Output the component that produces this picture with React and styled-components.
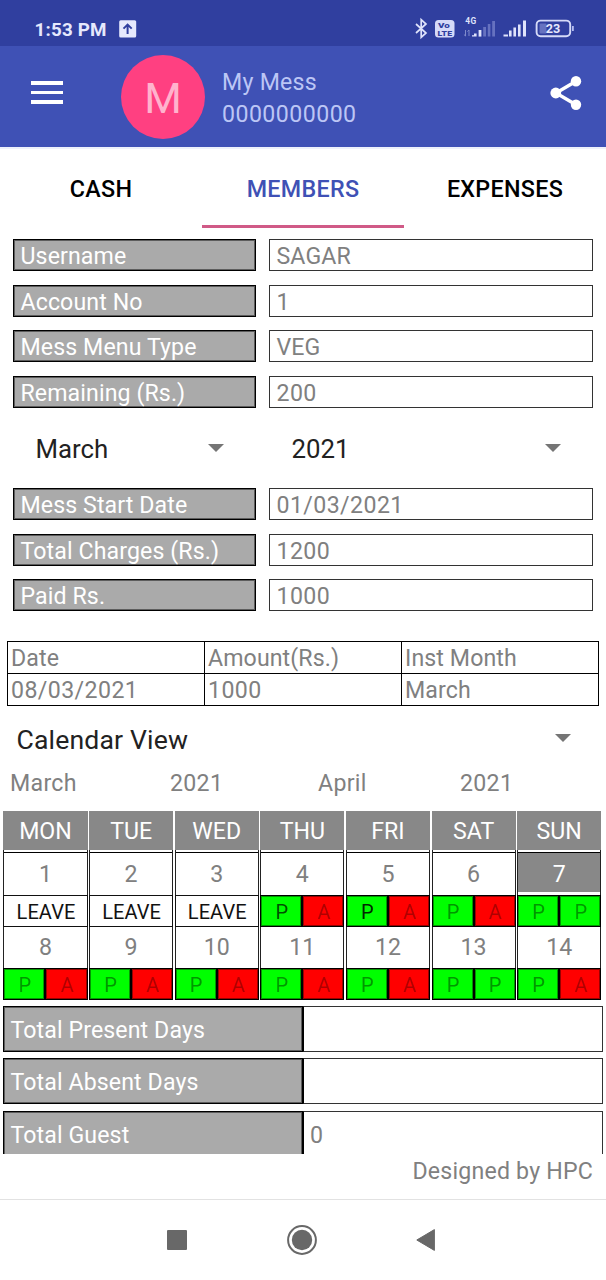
import React from 'react'
import styled, { createGlobalStyle } from 'styled-components'

const details = [
  ['Username', 'SAGAR'],
  ['Account No', '1'],
  ['Mess Menu Type', 'VEG'],
  ['Remaining (Rs.)', '200'],
]

const charges = [
  ['Mess Start Date', '01/03/2021'],
  ['Total Charges (Rs.)', '1200'],
  ['Paid Rs.', '1000'],
]

const payments = [
  ['Date', 'Amount(Rs.)', 'Inst Month'],
  ['08/03/2021', '1000', 'March'],
]

const weekDays = ['MON', 'TUE', 'WED', 'THU', 'FRI', 'SAT', 'SUN']

// L = leave, P = present, A = absent; dark sets how strong the first mark is
const days = [
  { day: 1, marks: 'L' },
  { day: 2, marks: 'L' },
  { day: 3, marks: 'L' },
  { day: 4, marks: 'PA', dark: 1 },
  { day: 5, marks: 'PA', dark: 2 },
  { day: 6, marks: 'PA' },
  { day: 7, marks: 'PP', today: true },
  { day: 8, marks: 'PA' },
  { day: 9, marks: 'PA' },
  { day: 10, marks: 'PA' },
  { day: 11, marks: 'PA' },
  { day: 12, marks: 'PA' },
  { day: 13, marks: 'PP' },
  { day: 14, marks: 'PA' },
]

const totals = [
  ['Total Present Days', ''],
  ['Total Absent Days', ''],
  ['Total Guest', '0'],
]

const isNumeric = (text) => /^[\d/]+$/.test(text)

function StatusIcons() {
  return (
    <svg width="170" height="24" viewBox="412 18 170 24">
      <path d="M416 25 L426 34 L421.2 38.4 V20.6 L426 25 L416 34" fill="none" stroke="#dfe3fb" strokeWidth="1.7" />
      <rect x="435" y="21" width="19.5" height="17.5" rx="3.5" fill="#d5daf8" />
      <g fill="#303f9f" fontFamily="Roboto, sans-serif" fontWeight="900">
        <text x="438" y="28.9" fontSize="8" textLength="12" lengthAdjust="spacingAndGlyphs">Vo</text>
        <text x="437.6" y="36.6" fontSize="8" textLength="14.5" lengthAdjust="spacingAndGlyphs">LTE</text>
      </g>
      <text x="465.2" y="25.4" fontSize="8.4" fontWeight="700" fill="#dfe3fb" fontFamily="Roboto, sans-serif" textLength="11">4G</text>
      <path d="M465.5 31V37M463.9 35.5L465.5 37M469 37V31M467.4 32.5L469 31" fill="none" stroke="#7f8acb" strokeWidth="1" />
      <path d="M472 36.2H476V37.6H472ZM474 34.5H476.6V37.6H474Z" fill="#dfe3fb" />
      <path d="M478.6 31H481.4V37.6H478.6Z" fill="#dfe3fb" />
      <path d="M483.2 28H486V37.6H483.2ZM487.8 25H490.4V37.6H487.8ZM492.2 22H495V37.6H492.2Z" fill="#6672c0" />
      <path d="M503.5 35.5H508V37.6H503.5ZM509 31.5H511.6V37.6H509ZM513.4 28.5H516V37.6H513.4ZM518 25.5H520.6V37.6H518ZM523 21.5H526V37.6H523Z" fill="#dfe3fb" />
      <rect x="536.6" y="21.6" width="33.6" height="15.6" rx="4" fill="none" stroke="#d5daf8" strokeWidth="1.9" />
      <rect x="539.5" y="24.5" width="7" height="10" rx="1" fill="#6672c0" />
      <path d="M572 27H573.8V32H572Z" fill="#b5bdf0" />
      <text x="553" y="33.8" fontSize="12.6" fontWeight="700" textAnchor="middle" fill="#e6e9fd" fontFamily="Roboto, sans-serif" textLength="14.6">23</text>
    </svg>
  )
}

function Field({ label, value }) {
  return (
    <FieldRow>
      <FieldLabel>{label}</FieldLabel>
      <FieldValue $numeric={isNumeric(value)}>{value}</FieldValue>
    </FieldRow>
  )
}

function DayCell({ day, marks, dark, today }) {
  return (
    <Day>
      <DayNumber $today={today}><span>{day}</span></DayNumber>
      {marks === 'L' ? (
        <Leave>LEAVE</Leave>
      ) : (
        <Marks>
          {marks.split('').map((mark, i) => (
            <Mark key={i} $absent={mark === 'A'} $dark={i === 0 ? dark : 0}>{mark}</Mark>
          ))}
        </Marks>
      )}
    </Day>
  )
}

function App() {
  return (
    <Screen>
      <GlobalStyle />
      <StatusBar>
        <Clock>1:53 PM</Clock>
        <svg width="18" height="18" viewBox="0 0 18 18">
          <rect x="0.2" y="0.2" width="17" height="17.4" rx="1.5" fill="#e6e9fd" />
          <path d="M8.6 14V5.2M4.5 8.6L8.6 4.6L12.7 8.6" fill="none" stroke="#303f9f" strokeWidth="2" />
        </svg>
        <StatusRight><StatusIcons /></StatusRight>
      </StatusBar>

      <AppBar>
        <Burger>
          <i />
          <i />
          <i />
        </Burger>
        <Avatar>M</Avatar>
        <Account>
          <Name>My Mess</Name>
          <Phone>0000000000</Phone>
        </Account>
        <svg width="32" height="36" viewBox="0 0 32 36">
          <path d="M26 6.2L6 18L26 29.8" fill="none" stroke="#fff" strokeWidth="3.4" />
          <circle cx="26" cy="6.2" r="5.2" fill="#fff" />
          <circle cx="5.8" cy="18" r="5.4" fill="#fff" />
          <circle cx="26" cy="29.8" r="5.2" fill="#fff" />
        </svg>
      </AppBar>

      <Tabs>
        <Tab>CASH</Tab>
        <Tab $active>MEMBERS</Tab>
        <Tab>EXPENSES</Tab>
      </Tabs>

      <Content>
        <Fields>
          {details.map(([label, value]) => <Field key={label} label={label} value={value} />)}
        </Fields>

        <Spinners>
          <Spinner $width="188px">March<Arrow /></Spinner>
          <Spinner $width="269px">2021<Arrow /></Spinner>
        </Spinners>

        <Fields>
          {charges.map(([label, value]) => <Field key={label} label={label} value={value} />)}
        </Fields>

        <Payments>
          <tbody>
            {payments.map((row) => (
              <tr key={row[0]}>
                {row.map((cell) => <Cell key={cell} $numeric={isNumeric(cell)}>{cell}</Cell>)}
              </tr>
            ))}
          </tbody>
        </Payments>

        <ViewSpinner>
          <Spinner $width="554px" $size="26.6px">Calendar View<Arrow /></Spinner>
        </ViewSpinner>

        <Months>
          <span>March</span>
          <span>2021</span>
          <span>April</span>
          <span>2021</span>
        </Months>

        <Calendar>
          {weekDays.map((name) => <WeekDay key={name}>{name}</WeekDay>)}
          {days.map((d) => <DayCell key={d.day} {...d} />)}
        </Calendar>

        <Totals>
          {totals.map(([label, value]) => (
            <TotalRow key={label}>
              <TotalLabel>{label}</TotalLabel>
              <TotalValue>{value}</TotalValue>
            </TotalRow>
          ))}
        </Totals>
      </Content>

      <Credit>Designed by HPC</Credit>

      <NavBar>
        <svg width="20" height="20" viewBox="0 0 20 20">
          <rect width="20" height="20" rx="1" fill="#686868" />
        </svg>
        <svg width="30" height="30" viewBox="0 0 30 30">
          <circle cx="15" cy="15" r="13.9" fill="none" stroke="#686868" strokeWidth="2" />
          <circle cx="15" cy="15" r="10.2" fill="#686868" />
        </svg>
        <svg width="20" height="22" viewBox="0 0 20 22">
          <path d="M0.8 11L18.4 0.6V21.4Z" fill="#686868" stroke="#686868" strokeLinejoin="round" />
        </svg>
      </NavBar>
    </Screen>
  )
}

export default App

const GlobalStyle = createGlobalStyle`
*{
    box-sizing: border-box;
}
body{
    margin: 0;
    background-color: #fff;
}
p{
    margin: 0;
}
`;

const Screen = styled.div`
width: 606px;
height: 1280px;
display: flex;
flex-direction: column;
overflow: hidden;
background-color: #fff;
color: #808080;
font-family: Roboto, sans-serif;
font-size: 23.15px;
letter-spacing: 0.1px;
`;

const StatusBar = styled.div`
height: 46px;
flex-shrink: 0;
display: flex;
align-items: center;
padding: 12px 24px 0 34.5px;
background-color: #303f9f;
`;

const Clock = styled.div`
width: 84px;
padding-top: 1px;
font-size: 18.8px;
font-weight: 700;
letter-spacing: 0.2px;
color: #e6e9fd;
`;

const StatusRight = styled.div`
display: flex;
margin-left: auto;
`;

const AppBar = styled.div`
height: 103px;
flex-shrink: 0;
display: flex;
align-items: center;
padding: 0 24px 8px 31px;
background-color: #3f51b5;
border-bottom: 2px solid #edf1fb;
`;

const Burger = styled.div`
width: 32px;
display: flex;
flex-direction: column;
gap: 6px;
i{
    height: 3.4px;
    background-color: #fff;
}
`;

const Avatar = styled.div`
width: 84px;
height: 84px;
flex-shrink: 0;
display: flex;
justify-content: center;
align-items: center;
margin: 8px 17px 0 58px;
padding-top: 3px;
border-radius: 50%;
background-color: #ff4081;
color: #ffb3cd;
font-size: 43px;
letter-spacing: 0;
`;

const Account = styled.div`
flex: 1;
padding-top: 12px;
line-height: 32px;
color: #bcc6f5;
`;

const Name = styled.p`
letter-spacing: 0.25px;
`;

const Phone = styled.p`
letter-spacing: 0.45px;
`;

const Tabs = styled.div`
height: 79px;
flex-shrink: 0;
display: flex;
`;

const Tab = styled.div`
flex: 1;
display: flex;
justify-content: center;
align-items: center;
border-bottom: 3px solid ${(props) => (props.$active ? '#d05a87' : 'transparent')};
padding-top: 4px;
color: ${(props) => (props.$active ? '#3f51b5' : '#000')};
font-size: 23.3px;
font-weight: 500;
letter-spacing: 0.3px;
`;

const Content = styled.div`
height: 926px;
flex-shrink: 0;
overflow: hidden;
padding-top: 11.4px;
`;

const Fields = styled.div`
display: flex;
flex-direction: column;
gap: 13.45px;
padding: 0 13px;
`;

const FieldRow = styled.div`
display: flex;
gap: 13px;
height: 32px;
line-height: 34px;
`;

const FieldLabel = styled.div`
width: 243px;
padding-left: 6.5px;
border: 1px solid #000;
box-shadow: inset 0 0 0 1px rgba(0, 0, 0, 0.45);
background-color: #aaa;
color: #fff;
`;

const FieldValue = styled.div`
flex: 1;
padding-left: 6.5px;
border: 1px solid #333;
letter-spacing: ${(props) => (props.$numeric ? '0.41px' : '0.1px')};
`;

const Spinners = styled.div`
height: 80.4px;
display: flex;
align-items: center;
gap: 68px;
padding: 3px 36px 0 35.5px;
`;

const Spinner = styled.div`
width: ${(props) => props.$width};
display: flex;
justify-content: space-between;
align-items: center;
color: #222;
font-size: ${(props) => props.$size || '25.8px'};
letter-spacing: ${(props) => (props.$size ? '0.15px' : '0')};
`;

const Arrow = styled.i`
margin-top: -2px;
border: 8px solid transparent;
border-top-color: #757575;
border-bottom: 0;
`;

const Payments = styled.table`
width: 592px;
margin: 30px 0 0 7px;
border-collapse: collapse;
table-layout: fixed;
`;

const Cell = styled.td`
height: 32px;
padding: 2px 0 0 3px;
border: 1px solid #000;
line-height: 29px;
letter-spacing: ${(props) => (props.$numeric ? '0.41px' : '0.1px')};
`;

const ViewSpinner = styled.div`
height: 56px;
display: flex;
align-items: center;
padding: 11px 0 0 16.5px;
`;

const Months = styled.div`
height: 49px;
display: grid;
grid-template-columns: 160px 148px 142px 1fr;
padding-left: 10px;
line-height: 44px;
letter-spacing: 0.3px;
`;

const Calendar = styled.div`
display: grid;
grid-template-columns: repeat(7, 84.2px);
column-gap: 1.45px;
padding-left: 3.4px;
text-align: center;
`;

const WeekDay = styled.div`
height: 39px;
background-color: #888;
color: #fff;
line-height: 42px;
letter-spacing: 0;
`;

const Day = styled.div`
display: flex;
flex-direction: column;
`;

const DayNumber = styled.div`
height: 45px;
padding: 2px 0 ${(props) => (props.$today ? '3px' : '0')};
border: 1px solid #222;
border-width: 0 1px;
line-height: 44px;
span{
    display: block;
    height: 100%;
    border-top: 1px solid #000;
    background-color: ${(props) => (props.$today ? '#888' : '#fff')};
    color: ${(props) => (props.$today ? '#fff' : '#808080')};
}
${Day}:nth-child(n + 15) &{
    height: 41px;
    padding-top: 0;
    line-height: 41px;
    span{
        border-top: 0;
    }
}
`;

const Leave = styled.div`
height: 32px;
padding-left: 1px;
border: 1px solid #111;
color: #111;
font-size: 20px;
line-height: 32px;
`;

const Marks = styled.div`
height: 32px;
display: flex;
background-color: #000;
`;

const Mark = styled.div`
flex: 1;
padding-left: 1px;
border: 1.5px solid #000;
box-shadow: inset 0 0 0 1px rgba(0, 0, 0, 0.4);
background-color: ${(props) => (props.$absent ? '#f00' : '#0f0')};
color: rgba(0, 0, 0, ${(props) => (props.$dark === 2 ? 0.85 : props.$dark ? 0.7 : props.$absent ? 0.32 : 0.42)});
font-size: 20px;
line-height: 32px;
`;

const Totals = styled.div`
display: flex;
flex-direction: column;
gap: 6.4px;
padding: 6px 3px 0;
`;

const TotalRow = styled.div`
height: 46px;
flex-shrink: 0;
display: flex;
line-height: 48px;
`;

const TotalLabel = styled.div`
width: 300px;
padding-left: 6.5px;
border: 1px solid #000;
box-shadow: inset 0 0 0 1px rgba(0, 0, 0, 0.45);
background-color: #aaa;
color: #fff;
`;

const TotalValue = styled.div`
flex: 1;
padding-left: 6px;
border: 1px solid #333;
border-left-color: #000;
`;

const Credit = styled.div`
height: 45px;
flex-shrink: 0;
padding-right: 13px;
text-align: right;
line-height: 35px;
letter-spacing: 0.2px;
`;

const NavBar = styled.div`
flex: 1;
display: flex;
justify-content: space-between;
align-items: center;
padding: 0 170px 0 167px;
border-top: 1px solid #e2e2e2;
`;
